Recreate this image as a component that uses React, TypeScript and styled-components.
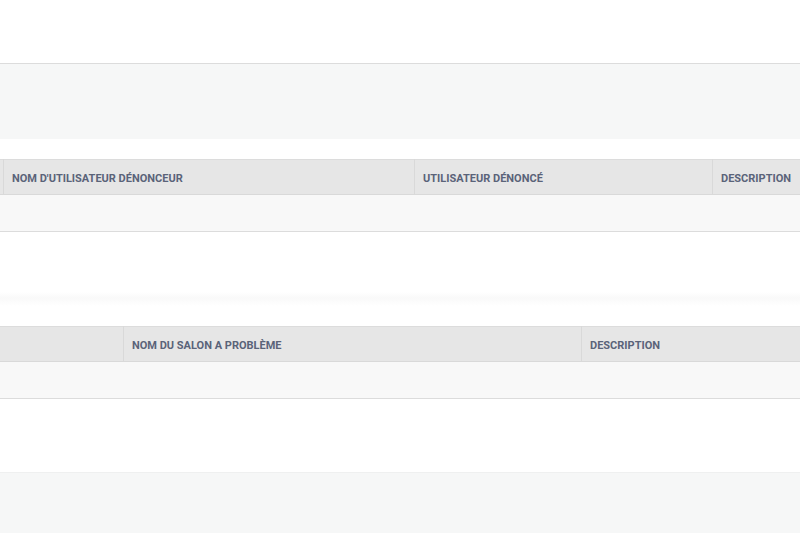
import React from 'react'
import styled, {createGlobalStyle} from 'styled-components'

type Column = {
    label: string,
    width: number
}

const reportsColumns: Column[] = [
    {label: '', width: 120},
    {label: "Nom d'utilisateur dénonceur", width: 411},
    {label: 'Utilisateur dénoncé', width: 298},
    {label: 'Description', width: 300},
]

const salonColumns: Column[] = [
    {label: '', width: 124},
    {label: 'Nom du salon a problème', width: 458},
    {label: 'Description', width: 300},
]

const ReportTable: React.FC<{columns: Column[], shift: number}> = ({columns, shift}) => {
    return (
        <StyledTableWrap>
            <StyledTable shift={shift}>
                <thead>
                <tr>
                    {columns.map((c, i) => (
                        <StyledTh key={i} style={{width: c.width, minWidth: c.width}}>{c.label}</StyledTh>
                    ))}
                </tr>
                </thead>
                <tbody>
                <tr>
                    {columns.map((c, i) => <StyledTd key={i}/>)}
                </tr>
                </tbody>
            </StyledTable>
        </StyledTableWrap>
    )
}

const App: React.FC = () => {
    return (
        <>
            <GlobalStyle/>
            <StyledPage>
                <StyledTopBar/>
                <StyledBanner/>
                <StyledSection>
                    <ReportTable columns={reportsColumns} shift={117}/>
                </StyledSection>
                <StyledFade/>
                <StyledSection>
                    <ReportTable columns={salonColumns} shift={1}/>
                </StyledSection>
                <StyledGap/>
                <StyledFooter/>
            </StyledPage>
        </>
    )
}
export default App

const GlobalStyle = createGlobalStyle`
    html, body {
        margin: 0;
        padding: 0;
        background: #ffffff;
        overflow: hidden;
    }
    * {
        box-sizing: border-box;
    }
`

const StyledPage = styled.div`
    width: 800px;
    height: 533px;
    display: flex;
    flex-direction: column;
    overflow: hidden;
    font-family: Roboto, "Liberation Sans", sans-serif;
`

const StyledTopBar = styled.div`
    flex: 0 0 64px;
    background: #ffffff;
    border-bottom: 1px solid #dcdcdc;
`

const StyledBanner = styled.div`
    flex: 0 0 75px;
    background: #f6f7f7;
`

const StyledSection = styled.div`
    padding-top: 20px;
`

const StyledFade = styled.div`
    flex: 0 0 74px;
    background: linear-gradient(to bottom, #ffffff 0, #ffffff 60px, #f9f9f9 66px, #ffffff 74px);
`

const StyledGap = styled.div`
    flex: 0 0 74px;
    background: #ffffff;
    border-bottom: 1px solid #eff0f0;
`

const StyledFooter = styled.div`
    flex: 1;
    background: #f6f7f7;
`

const StyledTableWrap = styled.div`
    width: 800px;
    overflow: hidden;
`

const StyledTable = styled.table<{shift: number}>`
    border-collapse: collapse;
    table-layout: fixed;
    margin-left: ${({shift}) => -shift}px;
`

const StyledTh = styled.th`
    height: 35px;
    padding: 3px 8px 0;
    text-align: left;
    background: #e6e6e6;
    border: 1px solid #d9d9d9;
    border-top-color: #dcdcdc;
    font-size: 11px;
    font-weight: 700;
    text-transform: uppercase;
    color: #5a6379;
    white-space: nowrap;
    vertical-align: middle;
`

const StyledTd = styled.td`
    height: 37px;
    padding: 0 8px;
    background: #f8f8f8;
    border-bottom: 1px solid #dcdcdc;
`
